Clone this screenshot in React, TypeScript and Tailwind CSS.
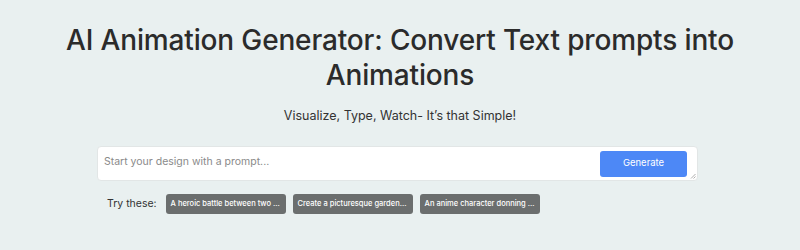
export default function App() {
  const prompts = [
    'A heroic battle between two ...',
    'Create a picturesque garden...',
    'An anime character donning ...',
  ];

  return (
    <div className="w-[800px] h-[250px] bg-[#e9f0f0] font-['Inter',sans-serif] text-[#2b2b2b] overflow-hidden">
      <div className="flex flex-col items-center pt-[23px]">
        <h1 className="text-center text-[28px] leading-[35px] font-medium tracking-[-0.15px] whitespace-nowrap">
          AI Animation Generator: Convert Text prompts into
          <br />
          Animations
        </h1>
        <p className="mt-[14px] text-[12.5px] leading-[18px] text-[#333]">
          Visualize, Type, Watch- It’s that Simple!
        </p>
      </div>

      <div className="ml-[97px] mt-[21px] w-[601px]">
        <div className="relative h-[35px] bg-white rounded-[4px] border border-[#e2e6e6] flex items-center justify-between pl-[6px] pr-[10px]">
          <textarea
            placeholder="Start your design with a prompt..."
            className="flex-1 h-full resize-none bg-transparent pt-[7px] text-[10.5px] leading-[16px] text-[#555] placeholder:text-[#8a8a8a] outline-none"
          />
          <button className="w-[87px] h-[26px] rounded-[3px] bg-[#4d88f6] text-white text-[9.5px]">
            Generate
          </button>
          <svg className="absolute right-[1px] bottom-[1px]" width="6" height="6" viewBox="0 0 6 6">
            <path d="M5.5 1 L1 5.5 M5.5 3.5 L3.5 5.5" stroke="#9a9a9a" strokeWidth="0.8" />
          </svg>
        </div>
      </div>

      <div className="ml-[107px] mt-[13px] flex items-center">
        <span className="text-[10.5px] text-[#333] mr-[9px]">Try these:</span>
        <div className="flex gap-[7px]">
          {prompts.map((p) => (
            <button
              key={p}
              className="w-[120px] h-[20px] rounded-[3px] bg-[#6b6e6e] text-white text-[7.5px] font-medium px-[5px] text-left whitespace-nowrap overflow-hidden"
            >
              {p}
            </button>
          ))}
        </div>
      </div>
    </div>
  );
}
